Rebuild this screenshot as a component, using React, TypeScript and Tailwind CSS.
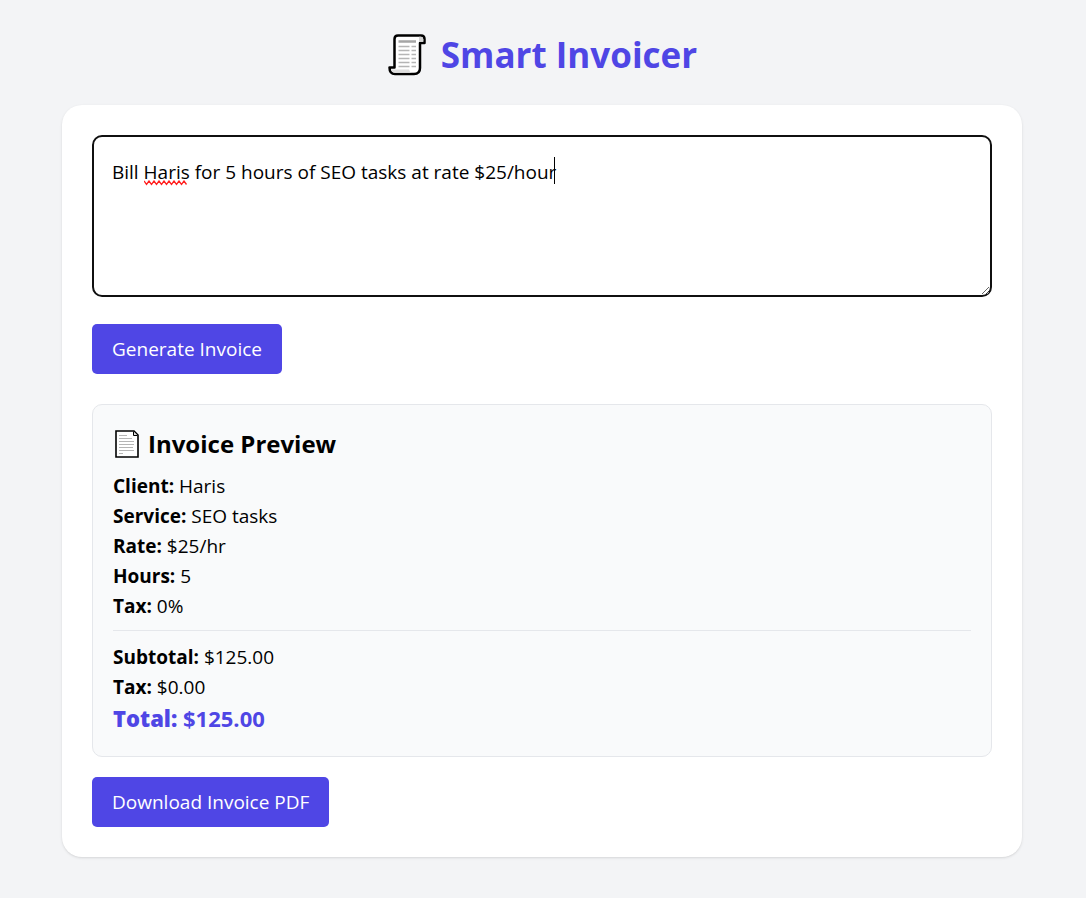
import { useState } from "react";

function ScrollIcon() {
  return (
    <svg aria-hidden="true" viewBox="0 0 40 46" className="h-[46px] w-10 shrink-0">
      <path
        d="M11 3.500H34q3.500 0 3.500 3.500V11H33V36q0 6-6 6H8q-5.500 0-5.500-6.500H7.500V7q0-3.500 3.500-3.500Z"
        fill="#fff"
        stroke="#000"
        strokeWidth="2.5"
        strokeLinejoin="round"
      />
      <path d="M4 37.500H22q.5 2.500 3 3.200H8.500q-3.500 0-4.500-3.200Z" fill="#dedede" />
      <path d="M32 4.800h2q2.300 0 2.300 2.500V9.800H32Z" fill="#d2d2d2" />
      <path d="M11.500 9.500H29" stroke="#a5a5a5" strokeWidth="2.5" />
      <path
        d="M11.500 14.500h11M24.500 14.500H29M11.500 18.500h11M24.500 18.500H29M11.500 22.500h11M24.500 22.500H29M11.500 26.500h11M24.500 26.500H29M11.500 30.500h11M24.500 30.500H29M11.500 34.500h11M24.500 34.500H29"
        stroke="#b5b5b5"
        strokeWidth="1.5"
      />
    </svg>
  );
}

function PageIcon() {
  return (
    <svg aria-hidden="true" viewBox="0 0 26 30" className="h-[30px] w-[26px] shrink-0">
      <path d="M2 2H20L24 6V28H2Z" fill="#fff" stroke="#000" strokeWidth="1.6" />
      <path d="M19.500 2.500V6.500H23.500" fill="#ddd" stroke="#000" strokeWidth="1" />
      <path
        d="M5 6.500h8M5 9.500h13M5 12.500h15M5 15.500h15M5 18.500h14M5 21.500h15M5 24.500h4"
        stroke="#b5b5b5"
        strokeWidth="1"
      />
    </svg>
  );
}

const details = [
  ["Client:", "Haris"],
  ["Service:", "SEO tasks"],
  ["Rate:", "$25/hr"],
  ["Hours:", "5"],
  ["Tax:", "0%"],
];

const totals = [
  ["Subtotal:", "$125.00"],
  ["Tax:", "$0.00"],
];

function Row({ label, value }: { label: string; value: string }) {
  return (
    <p>
      <strong className="font-bold">{label}</strong> {value}
    </p>
  );
}

export default function App() {
  const initial = "Bill Haris for 5 hours of SEO tasks at rate $25/hour";
  const [prompt, setPrompt] = useState(initial);

  return (
    <main className="min-h-screen bg-gray-100 py-[30px] pr-8 pl-[30px] font-['Open_Sans','Noto_Sans',sans-serif] text-black">
      <h1 className="mb-[25px] flex h-[50px] items-center justify-center gap-[14px] text-[35px] font-bold text-[#4f46e5]">
        <ScrollIcon />
        Smart Invoicer
      </h1>

      <section className="mx-auto max-w-[960px] rounded-[20px] bg-white p-[30px] text-[19px] leading-[30px] shadow-sm">
        <div className="relative">
          <textarea
            aria-label="Invoice description"
            spellCheck={false}
            value={prompt}
            onChange={(e) => setPrompt(e.target.value)}
            className="block h-[162px] w-full rounded-[10px] border-2 border-[#101010] bg-white px-[18px] py-5 outline-none"
          />
          {prompt === initial && (
            <>
              <svg
                aria-hidden="true"
                viewBox="0 0 45 6"
                className="pointer-events-none absolute top-[45px] left-[52px] h-[6px] w-[45px]"
              >
                <path
                  d="M0 1l2.500 3.500 2.500-3.500 2.500 3.500 2.500-3.500 2.500 3.500 2.500-3.500 2.500 3.500 2.500-3.500 2.500 3.500 2.500-3.500 2.500 3.500 2.500-3.500 2.500 3.500 2.500-3.500 2.500 3.500 2.500-3.500 2.500 3.500"
                  fill="none"
                  stroke="#ff2020"
                  strokeWidth="1.3"
                />
              </svg>
              <span className="pointer-events-none absolute top-[22px] left-[462px] h-[27px] w-px bg-black" />
            </>
          )}
        </div>

        <button
          type="button"
          className="mt-[27px] block h-[50px] rounded-[5px] bg-[#4f46e5] px-5 text-white"
        >
          Generate Invoice
        </button>

        <div className="mt-[30px] rounded-[10px] border border-gray-200 bg-gray-50 p-5 pb-[22px]">
          <h2 className="mb-2 flex h-[38px] items-center gap-2 pl-px text-2xl font-bold">
            <PageIcon />
            Invoice Preview
          </h2>
          {details.map(([label, value]) => (
            <Row key={label} label={label} value={value} />
          ))}
          <hr className="mt-[9px] mb-[11px] border-gray-200" />
          {totals.map(([label, value]) => (
            <Row key={label} label={label} value={value} />
          ))}
          <p className="text-[22px] leading-8 font-bold text-[#4f46e5]">
            <strong className="font-extrabold">Total:</strong> $125.00
          </p>
        </div>

        <button
          type="button"
          className="mt-5 block h-[50px] rounded-[5px] bg-[#4f46e5] px-5 text-white"
        >
          Download Invoice PDF
        </button>
      </section>
    </main>
  );
}
